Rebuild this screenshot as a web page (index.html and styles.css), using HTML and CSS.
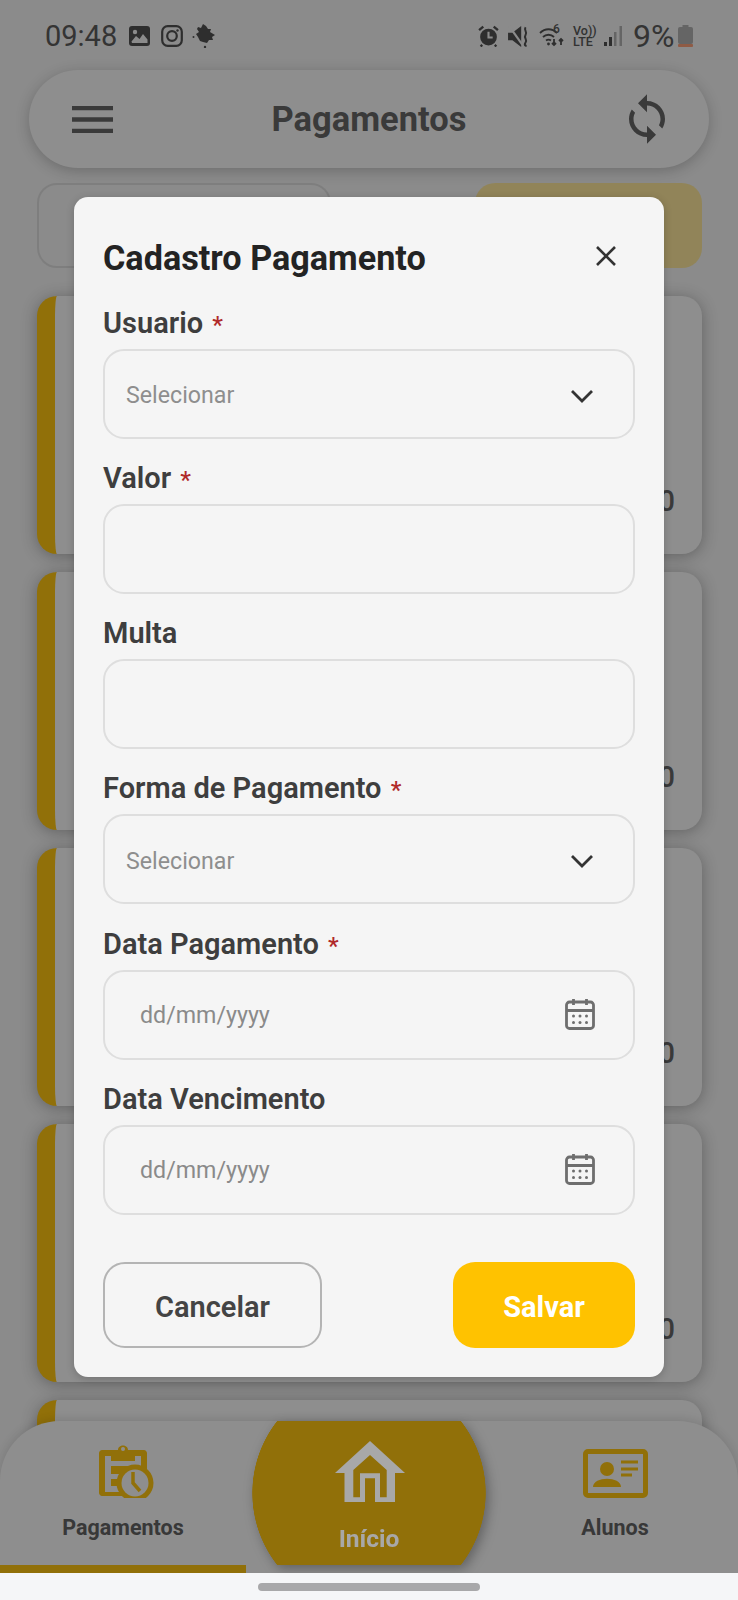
FILE: index.html
```html
<!DOCTYPE html>
<html lang="pt">
<head>
<meta charset="utf-8">
<title>Pagamentos</title>
<link rel="stylesheet" href="styles.css">
</head>
<body>
<div class="screen">
  <div class="status">
    <div class="status-left">
      <span class="time">09:48</span>
      <svg class="si-image" viewBox="0 0 21 20"><rect width="21" height="20" rx="3" class="f"/><circle cx="6" cy="6" r="2.2" class="cut"/><path d="M2.500 15.500 7 10l3.500 3 3.500-5 4.500 5.500v3.500h-15.500z" class="cut"/></svg>
      <svg class="si-insta" viewBox="0 0 22 22"><rect x="1.200" y="1.200" width="19.600" height="19.600" rx="5.500" class="s"/><circle cx="11" cy="11" r="4.800" class="s"/><circle cx="16.500" cy="5.500" r="1.200" class="f"/></svg>
      <svg class="si-leaf" viewBox="0 0 24 24"><path d="M6 3l3 1 2-4 3 2 2 3 3 0-1 3 5 3-3 2 1 3-4 0-2 3-4-1-3-1-2-4-2-3 3-2-2-3z" class="f"/><circle cx="1.500" cy="13" r="1" class="f"/><circle cx="13" cy="23" r="1.200" class="f"/></svg>
    </div>
    <div class="status-right">
      <svg class="si-alarm" viewBox="0 0 20 21"><circle cx="10" cy="11.500" r="8" class="f"/><path d="M1 5l4-3.500M19 5l-4-3.500" class="s"/><path d="M4 19l-1.500 1.500M16 19l1.500 1.500" class="s"/><path d="M10 6.500v5.500h4" class="cutline"/></svg>
      <svg class="si-mute" viewBox="0 0 20 21"><path d="M0 7h4l8-6v19l-8-6H0z" class="f"/><path d="M1 1l12 17" class="cutline"/><path d="M16 2c-2 3 2 4 0 7s2 4 0 7 1 3 1 3" class="s thin"/></svg>
      <svg class="si-wifi" viewBox="0 0 28 21"><path d="M1 7c5-5 12-5 17 0M4 11c3-3 8-3 11 0M7 14.500c2-1.500 3-1.500 5 0" class="s thin"/><circle cx="9.500" cy="18" r="1.400" class="f"/><path d="M15 13v6m-2-2 2 2 2-2M22 19v-6m-2 2 2-2 2 2" class="s thin"/></svg>
      <span class="wifi-six">6</span>
      <span class="volte"><span>Vo))</span><span>LTE</span></span>
      <svg class="si-signal" viewBox="0 0 19 20"><rect x="0" y="16" width="3" height="4" class="f"/><rect x="5" y="11" width="3" height="9" class="f"/><rect x="10" y="6" width="2.500" height="14" class="faint"/><rect x="15.500" y="0" width="2.500" height="20" class="faint"/></svg>
      <span class="pct">9%</span>
      <svg class="si-batt" viewBox="0 0 15 22"><rect x="4.500" y="0" width="6" height="2" class="faint"/><rect x="0" y="2" width="15" height="17" rx="2" class="faint"/><rect x="0" y="19" width="15" height="3" rx="1" class="low"/></svg>
    </div>
  </div>

  <header class="topbar">
    <svg class="menu" viewBox="0 0 41 27"><path d="M0 2h41M0 13.500h41M0 25h41"/></svg>
    <h1 class="topbar-title">Pagamentos</h1>
    <svg class="sync" viewBox="0 0 24 24"><path d="M12 4V1L8 5l4 4V6c3.310 0 6 2.690 6 6 0 1.010-.25 1.970-.7 2.800l1.460 1.460C19.540 15.030 20 13.570 20 12c0-4.420-3.580-8-8-8zm0 14c-3.310 0-6-2.690-6-6 0-1.010.25-1.970.7-2.800L5.240 7.740C4.460 8.970 4 10.430 4 12c0 4.420 3.580 8 8 8v3l4-4-4-4v3z"/></svg>
  </header>

  <div class="filters">
    <div class="filter-box"></div>
    <div class="filter-btn"></div>
  </div>

  <div class="cards">
    <div class="card"><span class="card-val">0</span></div>
    <div class="card"><span class="card-val">0</span></div>
    <div class="card"><span class="card-val">0</span></div>
    <div class="card"><span class="card-val">0</span></div>
    <div class="card"></div>
  </div>

  <nav class="nav">
    <div class="tab tab-active">
      <svg class="ic-clip" viewBox="0 0 56 56"><path d="M3 8h16c0-6 10-6 10 0h16c1.500 0 3 1.500 3 3v24h-14v19H3c-1.500 0-3-1.500-3-3V11c0-1.500 1.500-3 3-3z" class="gold"/><circle cx="24" cy="7" r="2" class="hole"/><path d="M6 14v36h15v-6H12v-7h9v-5H12v-8h30v-10h-6v5H12v-5z" class="hole"/><circle cx="36" cy="41" r="18.500" class="gold"/><circle cx="36" cy="41" r="13.500" class="hole"/><path d="M34 30v11l7 8" class="hand"/></svg>
      <span class="tab-label">Pagamentos</span>
    </div>
    <div class="tab">
      <div class="home">
        <svg class="ic-house" viewBox="0 0 70 61"><path class="house" fill-rule="evenodd" d="M0 32 35 0l35 32H60V61H9.500V32zM18.300 29 35 14l16.700 15V56.300H45V32.300H25V56.300H18.300zM30 37.300H40V61H30z"/></svg>
        <span class="home-label">Início</span>
      </div>
    </div>
    <div class="tab">
      <svg class="ic-id" viewBox="0 0 65 49"><rect x="2.500" y="2.500" width="60" height="44" rx="2.500" class="id-frame"/><circle cx="24" cy="20" r="7" class="gold"/><path d="M10 38c0-11 28-11 28 0z" class="gold"/><path d="M38 13h17M38 20h17M38 26h11" class="id-lines"/></svg>
      <span class="tab-label">Alunos</span>
    </div>
  </nav>

  <div class="overlay">
    <section class="modal">
      <div class="modal-head">
        <h2 class="modal-title">Cadastro Pagamento</h2>
        <svg class="close" viewBox="0 0 20 20"><path d="M1 1l18 18M19 1 1 19"/></svg>
      </div>
      <div class="form">
        <div class="field">
          <label class="label">Usuario <span class="req">*</span></label>
          <div class="input input-select"><span class="ph">Selecionar</span><svg class="chev" viewBox="0 0 24 14"><path d="M2 2l10 10L22 2"/></svg></div>
        </div>
        <div class="field">
          <label class="label">Valor <span class="req">*</span></label>
          <div class="input"></div>
        </div>
        <div class="field">
          <label class="label">Multa</label>
          <div class="input"></div>
        </div>
        <div class="field">
          <label class="label">Forma de Pagamento <span class="req">*</span></label>
          <div class="input input-select"><span class="ph">Selecionar</span><svg class="chev" viewBox="0 0 24 14"><path d="M2 2l10 10L22 2"/></svg></div>
        </div>
        <div class="field">
          <label class="label">Data Pagamento <span class="req">*</span></label>
          <div class="input input-date"><span class="ph-date">dd/mm/yyyy</span><svg class="cal" viewBox="0 0 30 32"><rect x="1.500" y="4" width="27" height="26.500" rx="3"/><path d="M1.500 12.500h27M8.500 1v6M21.500 1v6"/><g class="cal-dots"><circle cx="8.500" cy="18" r="1.500"/><circle cx="15" cy="18" r="1.500"/><circle cx="21.500" cy="18" r="1.500"/><circle cx="8.500" cy="24.500" r="1.500"/><circle cx="15" cy="24.500" r="1.500"/><circle cx="21.500" cy="24.500" r="1.500"/></g></svg></div>
        </div>
        <div class="field">
          <label class="label">Data Vencimento</label>
          <div class="input input-date"><span class="ph-date">dd/mm/yyyy</span><svg class="cal" viewBox="0 0 30 32"><rect x="1.500" y="4" width="27" height="26.500" rx="3"/><path d="M1.500 12.500h27M8.500 1v6M21.500 1v6"/><g class="cal-dots"><circle cx="8.500" cy="18" r="1.500"/><circle cx="15" cy="18" r="1.500"/><circle cx="21.500" cy="18" r="1.500"/><circle cx="8.500" cy="24.500" r="1.500"/><circle cx="15" cy="24.500" r="1.500"/><circle cx="21.500" cy="24.500" r="1.500"/></g></svg></div>
        </div>
      </div>
      <div class="actions">
        <button class="btn btn-cancel">Cancelar</button>
        <button class="btn btn-save">Salvar</button>
      </div>
    </section>
  </div>
</div>
<div class="gesture"><span class="handle"></span></div>
</body>
</html>
```
FILE: styles.css
```css
* { box-sizing: border-box; }
html, body { margin: 0; padding: 0; }
body {
  width: 738px;
  height: 1600px;
  overflow: hidden;
  background: #f5f6f8;
  font-family: Roboto, "Liberation Sans", sans-serif;
}

.screen {
  position: relative;
  height: 1573px;
  overflow: hidden;
  background: #d3d3d3;
  color: #585858;
}

/* status bar */
.status {
  height: 70px;
  padding: 0 45px 0 45px;
  display: flex;
  justify-content: space-between;
  align-items: flex-start;
}
.status-left, .status-right { display: flex; align-items: center; height: 72px; }
.time { font-size: 29px; color: #505050; width: 84px; }
.f { fill: #464646; }
.s { fill: none; stroke: #464646; stroke-width: 2.200; }
.thin { stroke-width: 1.800; }
.cut { fill: #d3d3d3; }
.cutline { fill: none; stroke: #d3d3d3; stroke-width: 2; }
.faint { fill: #9a9a9a; }
.low { fill: #d98a6a; }
.si-image { width: 21px; height: 20px; }
.si-insta { width: 22px; height: 22px; margin-left: 11px; }
.si-leaf { width: 24px; height: 24px; margin-left: 9px; }
.si-alarm { width: 21px; height: 22px; }
.si-mute { width: 22px; height: 23px; margin-left: 9px; }
.si-wifi { width: 28px; height: 21px; margin-left: 9px; }
.wifi-six { font-size: 12px; line-height: 12px; font-weight: 500; color: #4c4c4c; margin: -14px 0 0 -14px; width: 7px; }
.volte { display: flex; flex-direction: column; font-size: 12.500px; line-height: 11px; font-weight: 500; color: #4c4c4c; margin-left: 13px; width: 22px; }
.si-signal { width: 19px; height: 20px; margin-left: 9px; }
.pct { font-size: 32px; color: #505050; margin-left: 10px; width: 44px; }
.si-batt { width: 15px; height: 22px; margin-left: 1px; }

/* top bar */
.topbar {
  height: 98px;
  margin: 0 29px;
  padding: 0 35px 0 43px;
  border-radius: 49px;
  background: #d8d8d8;
  box-shadow: 0 3px 14px rgba(0, 0, 0, .22);
  display: flex;
  justify-content: space-between;
  align-items: center;
}
.menu { width: 41px; height: 27px; }
.menu path { fill: none; stroke: #585858; stroke-width: 4.500; }
.topbar-title { margin: 0 0 0 5px; font-size: 34.500px; font-weight: 700; color: #585858; }
.sync { width: 54px; height: 54px; fill: #585858; }

/* filter row */
.filters {
  margin: 15px 36px 28px 37px;
  display: flex;
  justify-content: space-between;
}
.filter-box { width: 294px; height: 85px; border: 2px solid #c0c0c0; border-radius: 20px; }
.filter-btn { width: 227px; height: 85px; border-radius: 20px; background: #dcc988; }

/* list cards */
.cards { margin: 0 36px 0 37px; display: flex; flex-direction: column; gap: 18px; }
.card {
  height: 258px;
  flex: none;
  padding: 0 27px 36px 0;
  border-left: 18px solid #dcaa0e;
  border-radius: 20px;
  background: #d8d8d8;
  box-shadow: 0 2px 16px rgba(0, 0, 0, .3);
  display: flex;
  justify-content: flex-end;
  align-items: flex-end;
}
.card-val { font-size: 29px; font-weight: 500; color: #585858; line-height: 34px; }

/* bottom nav */
.nav {
  position: absolute;
  left: 0;
  right: 0;
  bottom: 0;
  height: 152px;
  border-radius: 60px 60px 0 0;
  background: #d8d8d8;
  box-shadow: 0 -2px 10px rgba(0, 0, 0, .12);
  display: grid;
  grid-template-columns: repeat(3, 246px);
}
.tab { display: flex; flex-direction: column; align-items: center; }
.tab-active { border-bottom: 8px solid #dcaa0e; }
.tab-label { font-size: 21.500px; font-weight: 700; color: #555; margin-top: 17px; line-height: 26px; }
.ic-clip { width: 56px; height: 56px; margin: 21px 0 0 8px; }
.gold { fill: #dcaa0e; }
.hole { fill: #d8d8d8; }
.hand { fill: none; stroke: #dcaa0e; stroke-width: 3.500; }
.ic-id { width: 65px; height: 49px; margin-top: 28px; }
.id-frame { fill: #d8d8d8; stroke: #dcaa0e; stroke-width: 5; }
.id-lines { fill: none; stroke: #dcaa0e; stroke-width: 3; }
.home {
  width: 234px;
  height: 144px;
  display: flex;
  flex-direction: column;
  align-items: center;
  background: radial-gradient(circle 117px at center, #dcaa0e 99.500%, transparent 100%);
  filter: drop-shadow(3px 4px 6px rgba(0, 0, 0, .3));
}
.ic-house { width: 70px; height: 61px; margin: 20px 0 0 2px; }
.house { fill: #fff; }
.home-label { font-size: 24.500px; font-weight: 700; color: #fff; margin-top: 23px; line-height: 28px; }

/* modal */
.overlay {
  position: absolute;
  inset: 0;
  background: rgba(0, 0, 0, .34);
  display: flex;
  align-items: center;
  justify-content: center;
}
.modal {
  width: 590px;
  height: 1180px;
  padding: 38px 29px 28px;
  border-radius: 14px;
  background: #f5f5f5;
  box-shadow: 0 2px 8px rgba(0, 0, 0, .2);
}
.modal-head { display: flex; justify-content: space-between; align-items: center; height: 46px; margin-bottom: 26px; }
.modal-title { margin: 0; font-size: 34.200px; font-weight: 700; color: #232323; }
.close { width: 20px; height: 20px; margin: -4px 19px 0 0; }
.close path { fill: none; stroke: #333; stroke-width: 2.600; }
.form { display: flex; flex-direction: column; gap: 23.300px; }
.label { display: block; height: 32px; margin-bottom: 10px; font-size: 29px; line-height: 32px; font-weight: 600; color: #3e3e3e; }
.req { color: #b02a2a; font-size: 24px; font-weight: 500; margin-left: 2px; }
.input { height: 90px; border: 2px solid #dedede; border-radius: 21px; display: flex; align-items: center; justify-content: space-between; }
.input-select { padding: 0 39px 0 21px; }
.input-date { padding: 0 38px 0 35px; }
.ph { font-size: 23.200px; color: #8e8e8e; padding-top: 3px; }
.ph-date { font-size: 23.200px; color: #8a8a8a; padding-top: 1px; }
.chev { width: 24px; height: 14px; margin-top: 4px; }
.chev path { fill: none; stroke: #333; stroke-width: 2.800; }
.cal { width: 30px; height: 32px; margin-top: -2px; }
.cal rect, .cal > path { fill: none; stroke: #6e6e6e; stroke-width: 2.800; }
.cal-dots { fill: #6e6e6e; }
.actions { display: flex; justify-content: space-between; margin-top: 47px; }
.btn { height: 86px; padding-top: 6px; border-radius: 22px; font-family: inherit; font-size: 29px; font-weight: 600; }
.btn-cancel { width: 219px; background: transparent; border: 2px solid #b4b4b4; color: #444; }
.btn-save { width: 182px; background: #ffc200; border: 0; color: #fff; font-weight: 700; }

/* gesture bar */
.gesture { height: 27px; display: flex; justify-content: center; padding-top: 10px; }
.handle { width: 222px; height: 8px; border-radius: 4px; background: #a8a8aa; }
```
